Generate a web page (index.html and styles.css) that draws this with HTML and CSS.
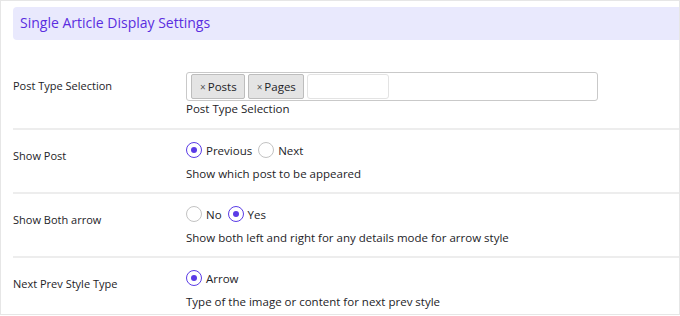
FILE: index.html
```html
<!DOCTYPE html>
<html lang="en">
<head>
  <meta charset="UTF-8" />
  <title>Single Article Display Settings</title>
  <link rel="stylesheet" href="styles.css">
</head>
<body>
  <div class="panel">
    <h2 class="panel-title">Single Article Display Settings</h2>

    <div class="row row-first">
      <div class="row-label">Post Type Selection</div>
      <div class="row-field">
        <div class="tag-box">
          <span class="tag"><span class="tag-x">×</span>Posts</span>
          <span class="tag"><span class="tag-x">×</span>Pages</span>
          <input class="tag-input" type="text">
        </div>
        <p class="help">Post Type Selection</p>
      </div>
    </div>

    <div class="row">
      <div class="row-label">Show Post</div>
      <div class="row-field">
        <div class="radios">
          <label class="radio"><span class="dot checked"></span>Previous</label>
          <label class="radio"><span class="dot"></span>Next</label>
        </div>
        <p class="help">Show which post to be appeared</p>
      </div>
    </div>

    <div class="row">
      <div class="row-label">Show Both arrow</div>
      <div class="row-field">
        <div class="radios">
          <label class="radio"><span class="dot"></span>No</label>
          <label class="radio"><span class="dot checked"></span>Yes</label>
        </div>
        <p class="help">Show both left and right for any details mode for arrow style</p>
      </div>
    </div>

    <div class="row">
      <div class="row-label">Next Prev Style Type</div>
      <div class="row-field">
        <div class="radios">
          <label class="radio"><span class="dot checked"></span>Arrow</label>
        </div>
        <p class="help">Type of the image or content for next prev style</p>
      </div>
    </div>
  </div>
</body>
</html>
```

FILE: styles.css
```css
body {
  margin: 0;
  font-family: "Open Sans", "Noto Sans", sans-serif;
  color: #1d2327;
  background: #fff;
}
.panel {
  width: 666px;
  height: 307px;
  border: 1px solid #e6e6e6;
  border-right-width: 2px;
  padding: 6px 0 0 12px;
  overflow: hidden;
}
.panel-title {
  margin: 0;
  height: 33px;
  line-height: 31px;
  padding-left: 7px;
  background: #e9e9fd;
  border-radius: 4px 0 0 4px;
  color: #5a2de0;
  font-size: 14px;
  font-weight: normal;
}
.row {
  display: grid;
  grid-template-columns: 173px 1fr;
  padding: 11px 0 10px;
  border-bottom: 2px solid #ededed;
}
.row-first {
  padding-top: 32px;
  padding-bottom: 11px;
}
.row-label {
  font-size: 11px;
  padding-top: 7px;
}
.row-first .row-label {
  padding-top: 6px;
}
.row-field {
  font-size: 11.5px;
}
.tag-box {
  width: 406px;
  height: 27px;
  border: 1px solid #c9c9c9;
  border-radius: 3px;
  display: flex;
  align-items: center;
  gap: 3px;
  padding-left: 4px;
}
.tag {
  height: 23px;
  padding: 0 7px 0 8px;
  background: #e4e4e4;
  border: 1px solid #bdbdbd;
  border-radius: 2px;
  display: flex;
  align-items: center;
  font-size: 11.5px;
}
.tag-x {
  font-size: 10px;
  color: #555;
  margin-right: 2px;
}
.tag-input {
  width: 82px;
  height: 25px;
  margin: 0;
  padding: 0;
  border: 1px solid #e3e3e3;
  border-radius: 3px;
  box-sizing: border-box;
}
.help {
  margin: 0;
  line-height: 16px;
}
.radios {
  display: flex;
  gap: 6px;
  height: 18px;
  align-items: center;
  margin-bottom: 7px;
}
.radio {
  display: flex;
  align-items: center;
  gap: 4px;
}
.dot {
  width: 14px;
  height: 14px;
  border: 1px solid #c3c3c3;
  border-radius: 50%;
  display: inline-flex;
  align-items: center;
  justify-content: center;
}
.dot.checked {
  border-color: #5a3be6;
}
.dot.checked::after {
  content: "";
  width: 6px;
  height: 6px;
  border-radius: 50%;
  background: #5a3be6;
}
```
